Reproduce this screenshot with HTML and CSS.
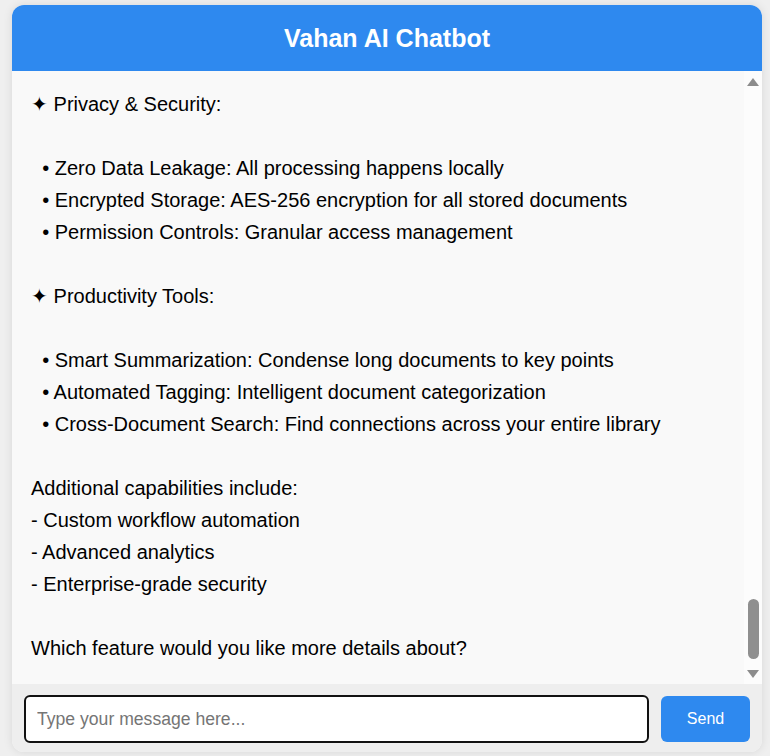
FILE: index.html
```html
<!DOCTYPE html>
<html lang="en">
<head>
<meta charset="utf-8">
<title>Vahan AI Chatbot</title>
<link rel="stylesheet" href="styles.css">
</head>
<body>
<div class="chat">
  <header class="chat-header"><h1 class="chat-title">Vahan AI Chatbot</h1></header>
  <div class="messages-wrap">
    <main class="messages">
      <div class="thread">
        <div class="msg msg-bot">✦ Privacy &amp; Security:

  • Zero Data Leakage: All processing happens locally
  • Encrypted Storage: AES-256 encryption for all stored documents
  • Permission Controls: Granular access management

✦ Productivity Tools:

  • Smart Summarization: Condense long documents to key points
  • Automated Tagging: Intelligent document categorization
  • Cross-Document Search: Find connections across your entire library

Additional capabilities include:
- Custom workflow automation
- Advanced analytics
- Enterprise-grade security

Which feature would you like more details about?</div>
      </div>
    </main>
    <div class="scrollbar" aria-hidden="true">
      <span class="scroll-arrow scroll-up"></span>
      <span class="scroll-track"></span>
      <span class="scroll-thumb"></span>
      <span class="scroll-arrow scroll-down"></span>
    </div>
  </div>
  <form class="composer">
    <input class="composer-input" type="text" placeholder="Type your message here..." autofocus>
    <button class="composer-send" type="button">Send</button>
  </form>
</div>
</body>
</html>
```
FILE: styles.css
```css
html, body {
  margin: 0;
  padding: 0;
  height: 100%;
}
body {
  background: #efefef;
  font-family: "Liberation Sans", Arial, sans-serif;
  overflow: hidden;
}
.chat {
  box-sizing: border-box;
  width: 750px;
  height: 747px;
  margin: 5px 0 0 12px;
  background: #f9f9f9;
  border-radius: 12px;
  box-shadow: 0 0 10px rgba(0, 0, 0, 0.1);
  display: flex;
  flex-direction: column;
  overflow: hidden;
}
.chat-header {
  flex: 0 0 66px;
  background: #2e89ef;
  display: flex;
  align-items: center;
  justify-content: center;
}
.chat-title {
  margin: 0;
  color: #fff;
  font-size: 25px;
  font-weight: bold;
}
.messages-wrap {
  position: relative;
  flex: 1 1 auto;
  min-height: 0;
  display: flex;
}
.messages {
  flex: 1 1 auto;
  min-height: 0;
  overflow-y: auto;
  scrollbar-width: none;
  display: flex;
  flex-direction: column-reverse;
  background: #f9f9f9;
}
.thread {
  padding: 0 19px 20px 19px;
}
.msg {
  white-space: pre-wrap;
  font-size: 20px;
  line-height: 32px;
  color: #000;
}
.scrollbar {
  position: absolute;
  top: 0;
  right: 0;
  bottom: 0;
  width: 18px;
  background: #fcfcfc;
  display: flex;
  flex-direction: column;
  align-items: center;
}
.scroll-arrow {
  width: 0;
  height: 0;
  border-left: 6px solid transparent;
  border-right: 6px solid transparent;
}
.scroll-up {
  margin-top: 7px;
  border-bottom: 8px solid #8c8c8c;
}
.scroll-down {
  margin-top: 11px;
  margin-bottom: 6px;
  border-top: 8px solid #8c8c8c;
}
.scroll-track {
  flex: 1 1 auto;
}
.scroll-thumb {
  width: 11px;
  height: 60px;
  border-radius: 6px;
  background: #8f8f8f;
}
.composer {
  flex: 0 0 68px;
  box-sizing: border-box;
  margin: 0;
  padding: 11px 12px 9px 12px;
  background: #eeeeee;
  display: flex;
  gap: 12px;
  align-items: flex-start;
}
.composer-input {
  flex: 1 1 auto;
  box-sizing: border-box;
  height: 48px;
  margin: 0;
  padding: 0 11px;
  border: 2px solid #111;
  border-radius: 6px;
  background: #fff;
  font-family: "Liberation Sans", Arial, sans-serif;
  font-size: 17.6px;
  color: #000;
  outline: none;
}
.composer-input::placeholder {
  color: #757575;
}
.composer-send {
  flex: 0 0 89px;
  box-sizing: border-box;
  height: 46px;
  margin-top: 1px;
  border: none;
  border-radius: 6px;
  background: #2e89ef;
  color: #fff;
  font-family: "Liberation Sans", Arial, sans-serif;
  font-size: 16px;
  cursor: pointer;
}
```
